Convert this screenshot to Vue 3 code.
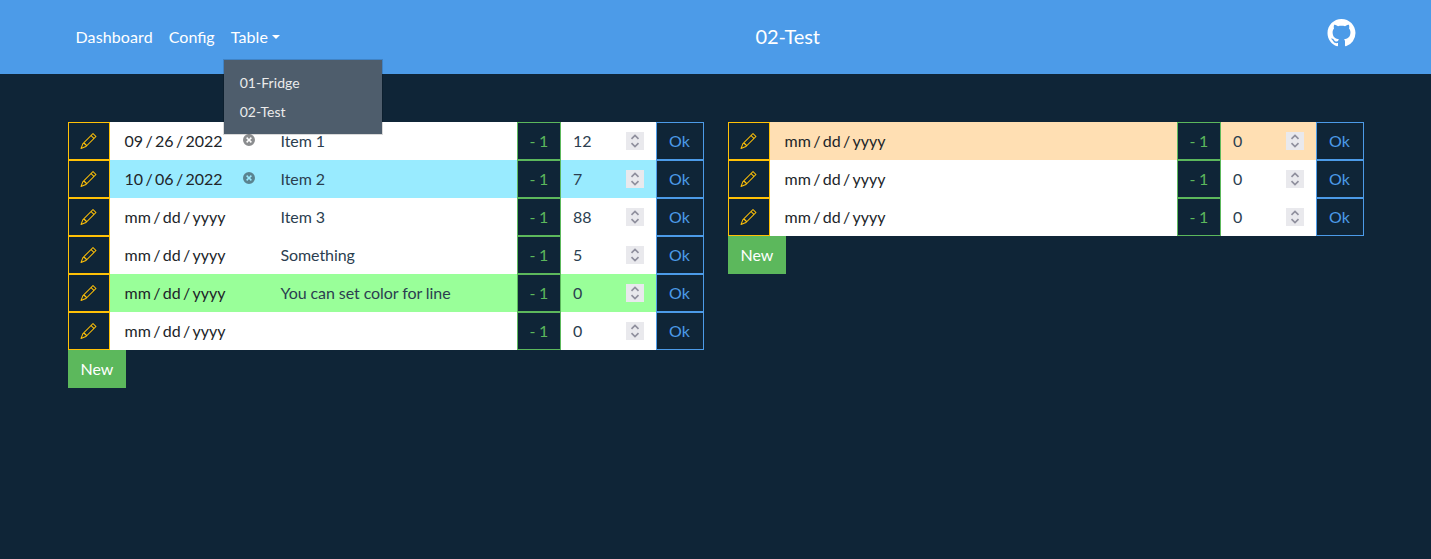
<script setup>
const tables = [
  [
    { date: ['09', '26', '2022'], set: true, name: 'Item 1', count: 12, tone: 'plain' },
    { date: ['10', '06', '2022'], set: true, name: 'Item 2', count: 7, tone: 'blue' },
    { date: ['mm', 'dd', 'yyyy'], name: 'Item 3', count: 88, tone: 'plain' },
    { date: ['mm', 'dd', 'yyyy'], name: 'Something', count: 5, tone: 'plain' },
    { date: ['mm', 'dd', 'yyyy'], name: 'You can set color for line', count: 0, tone: 'green' },
    { date: ['mm', 'dd', 'yyyy'], name: '', count: 0, tone: 'plain' },
  ],
  [
    { date: ['mm', 'dd', 'yyyy'], name: '', count: 0, tone: 'orange' },
    { date: ['mm', 'dd', 'yyyy'], name: '', count: 0, tone: 'plain' },
    { date: ['mm', 'dd', 'yyyy'], name: '', count: 0, tone: 'plain' },
  ],
]
const menu = ['01-Fridge', '02-Test']
</script>

<template>
  <div class="page">
    <header class="bar">
      <div class="container bar-inner">
        <nav class="nav">
          <a class="link first">Dashboard</a>
          <a class="link">Config</a>
          <div class="dropdown">
            <a class="link toggle">Table<span class="caret"></span></a>
            <div class="menu">
              <a v-for="m in menu" :key="m" class="menu-item">{{ m }}</a>
            </div>
          </div>
        </nav>
        <div class="title">02-Test</div>
        <a class="github">
          <svg width="28" height="28" viewBox="0 0 16 16" fill="currentColor">
            <path transform="translate(0.28 0)" d="M8 0C3.58 0 0 3.58 0 8c0 3.54 2.29 6.53 5.47 7.59.4.07.55-.17.55-.38 0-.19-.01-.82-.01-1.49-2.01.37-2.53-.49-2.69-.94-.09-.23-.48-.94-.82-1.13-.28-.15-.68-.52-.01-.53.63-.01 1.08.58 1.23.82.72 1.21 1.87.87 2.33.66.07-.52.28-.87.51-1.07-1.78-.2-3.64-.89-3.64-3.95 0-.87.31-1.59.82-2.15-.08-.2-.36-1.02.08-2.12 0 0 .67-.21 2.2.82.64-.18 1.32-.27 2-.27.68 0 1.36.09 2 .27 1.53-1.04 2.2-.82 2.2-.82.44 1.1.16 1.92.08 2.12.51.56.82 1.27.82 2.15 0 3.07-1.87 3.75-3.65 3.95.29.25.54.73.54 1.48 0 1.07-.01 1.93-.01 2.2 0 .21.15.46.55.38A8.012 8.012 0 0 0 16 8c0-4.42-3.58-8-8-8z" />
          </svg>
        </a>
      </div>
    </header>

    <main class="container columns">
      <section v-for="(rows, t) in tables" :key="t" class="column">
        <div v-for="(row, i) in rows" :key="i" class="row">
          <button class="btn edit">
            <svg width="16" height="16" viewBox="0 0 16 16" fill="currentColor">
              <path transform="translate(0.5 0)" d="M12.146.146a.5.5 0 0 1 .708 0l3 3a.5.5 0 0 1 0 .708l-10 10a.5.5 0 0 1-.168.11l-5 2a.5.5 0 0 1-.65-.65l2-5a.5.5 0 0 1 .11-.168l10-10zM11.207 2.5 13.5 4.793 14.793 3.5 12.5 1.207 11.207 2.5zm1.586 3L10.5 3.207 4 9.707V10h.5a.5.5 0 0 1 .5.5v.5h.5a.5.5 0 0 1 .5.5v.5h.293l6.5-6.5zm-9.761 5.175-.106.106-1.528 3.821 3.821-1.528.106-.106A.5.5 0 0 1 5 12.5V12h-.5a.5.5 0 0 1-.5-.5V11h-.5a.5.5 0 0 1-.468-.325z" />
            </svg>
          </button>
          <div class="field date" :class="row.tone">
            <span class="date-text"><span>{{ row.date[0] }}</span><i>/</i><span>{{ row.date[1] }}</span><i>/</i><span>{{ row.date[2] }}</span></span>
            <svg v-if="row.set" class="clear" width="12" height="12" viewBox="0 0 12 12">
              <path fill="currentColor" fill-rule="evenodd" d="M6 0a6 6 0 1 0 0 12A6 6 0 0 0 6 0zM4.2 3.1 6 4.9l1.8-1.8 1.1 1.1L7.1 6l1.8 1.8-1.1 1.1L6 7.1 4.2 8.9 3.1 7.8 4.9 6 3.1 4.2z" />
            </svg>
          </div>
          <div class="field name" :class="row.tone">{{ row.name }}</div>
          <button class="btn minus">- 1</button>
          <div class="field count" :class="row.tone">
            <span>{{ row.count }}</span>
            <svg class="spin" width="18" height="18" viewBox="0 0 18 18">
              <path d="M5.5 6.8 9 3.5l3.5 3.3M5.5 11.2 9 14.5l3.5-3.3" fill="none" stroke="#8f8f9d" stroke-width="1.7" />
            </svg>
          </div>
          <button class="btn ok">Ok</button>
        </div>
        <button class="btn new">New</button>
      </section>
    </main>
  </div>
</template>

<style>
body {
  background: #0f2537;
}
</style>

<style scoped>
.page {
  min-height: 559px;
  background: #0f2537;
  font: 400 16px/24px Lato, "Liberation Sans", sans-serif;
  color: #ebebeb;
}
.page * {
  box-sizing: border-box;
}
.container {
  width: 1320px;
  margin: 0 auto;
  padding: 0 12px;
}
.bar {
  height: 74px;
  background: #4c9be8;
}
.bar-inner {
  height: 74px;
  display: flex;
  align-items: center;
  justify-content: space-between;
}
.nav {
  display: flex;
  width: 600px;
}
.link {
  display: block;
  padding: 8px;
  color: #fff;
}
.first {
  letter-spacing: 0.12px;
}
.dropdown {
  position: relative;
}
.toggle {
  letter-spacing: 0.1px;
}
.caret {
  display: inline-block;
  margin-left: 4px;
  vertical-align: 4px;
  border-top: 4.8px solid;
  border-left: 4.8px solid transparent;
  border-right: 4.8px solid transparent;
}
.menu {
  position: absolute;
  top: 42px;
  left: 0;
  z-index: 2;
  width: 160px;
  padding: 8px 0;
  background: #4e5d6c;
  background-clip: padding-box;
  border: 1px solid rgba(0, 0, 0, 0.15);
}
.menu-item {
  display: block;
  padding: 4px 16px;
  font-size: 14px;
  line-height: 21px;
  letter-spacing: 0.04px;
}
.title {
  flex: 1;
  padding: 0 0 2px 88px;
  font-size: 20px;
  line-height: 30px;
  letter-spacing: -0.12px;
  color: #fff;
}
.github {
  display: flex;
  padding: 0 8.5px 8px;
  color: #fff;
}
.github svg,
.edit svg {
  overflow: visible;
}
.columns {
  display: flex;
  gap: 24px;
  padding-top: 48px;
}
.column {
  width: 636px;
}
.row {
  display: flex;
  height: 38px;
}
.btn {
  display: block;
  height: 38px;
  padding: 6px 12px;
  border: 1px solid;
  background: #0f2537;
  font: inherit;
  text-align: center;
  white-space: nowrap;
  flex: none;
}
.edit {
  width: 42px;
  padding-left: 11.5px;
  color: #ffc107;
}
.edit svg {
  display: block;
  margin-top: -1px;
}
.minus {
  width: 44px;
  word-spacing: -0.6px;
  color: #5cb85c;
}
.ok {
  width: 48px;
  color: #4c9be8;
}
.new {
  width: 58px;
  background: #5cb85c;
  border-color: #5cb85c;
  color: #fff;
}
.field {
  display: flex;
  align-items: center;
  color: #2b3e50;
}
.plain {
  background: #fff;
}
.blue {
  background: #99ebff;
}
.green {
  background: #99ff99;
}
.orange {
  background: #ffdfb3;
}
.date {
  width: 158px;
  padding-left: 15px;
  color: #212529;
  position: relative;
}
.date-text {
  display: flex;
}
.date-text i {
  font-style: normal;
  padding: 0 2.35px;
}
.clear {
  position: absolute;
  left: 133.5px;
  top: 12px;
  color: rgba(33, 37, 41, 0.52);
}
.name {
  flex: 1;
  padding-left: 13px;
  letter-spacing: -0.08px;
}
.count {
  width: 95px;
  padding: 0 12px 0 12.5px;
  justify-content: space-between;
}
.spin {
  background: #e9e9ed;
}
</style>
